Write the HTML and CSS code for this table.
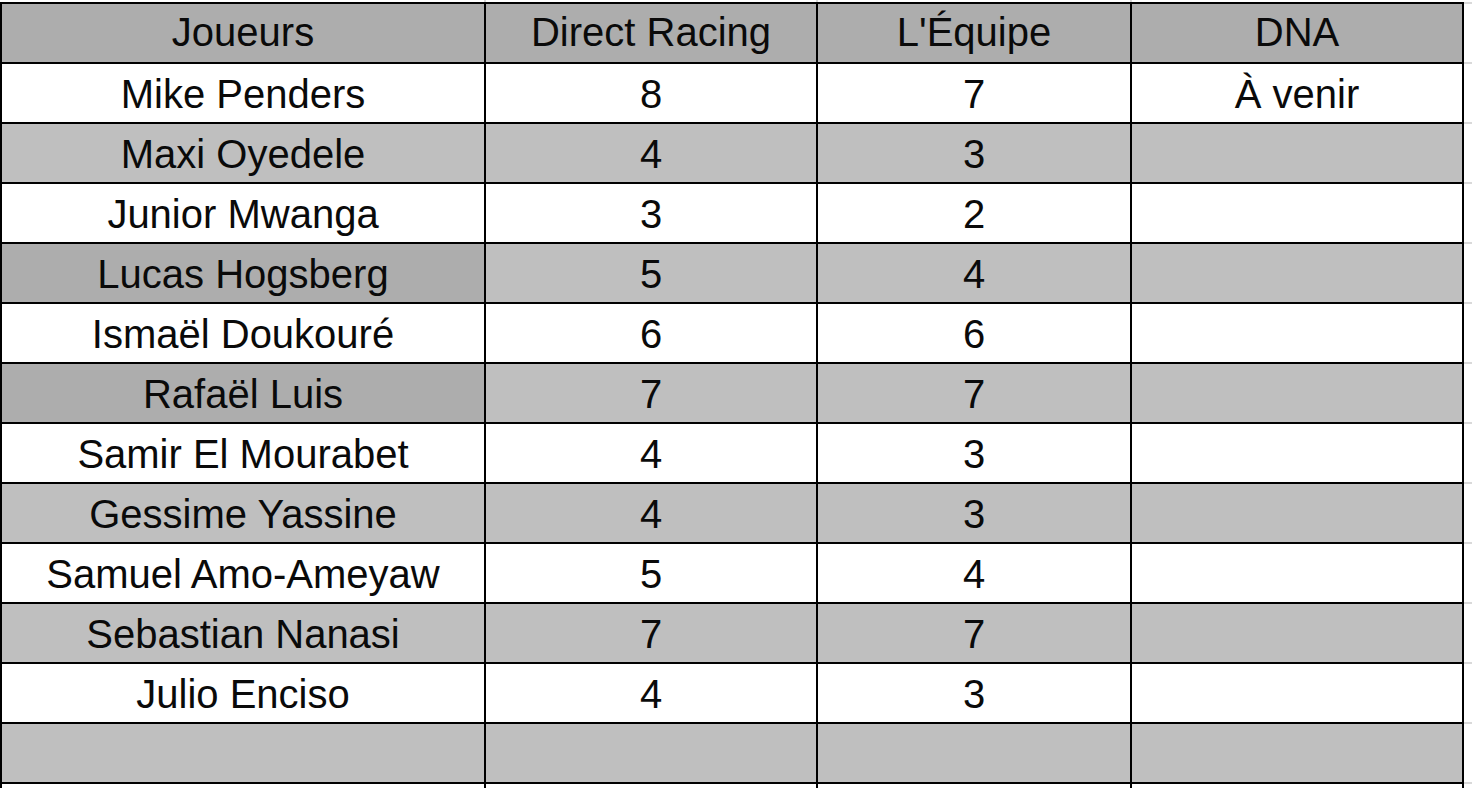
FILE: index.html
```html
<!DOCTYPE html>
<html lang="fr">
<head>
<meta charset="utf-8">
<title>Notes des joueurs</title>
<link rel="stylesheet" href="styles.css">
</head>
<body>
<div class="sheet">
  <div class="cell head">Joueurs</div>
  <div class="cell head">Direct Racing</div>
  <div class="cell head">L'Équipe</div>
  <div class="cell head">DNA</div>

  <div class="cell">Mike Penders</div>
  <div class="cell">8</div>
  <div class="cell">7</div>
  <div class="cell">À venir</div>

  <div class="cell alt">Maxi Oyedele</div>
  <div class="cell alt">4</div>
  <div class="cell alt">3</div>
  <div class="cell alt"></div>

  <div class="cell">Junior Mwanga</div>
  <div class="cell">3</div>
  <div class="cell">2</div>
  <div class="cell"></div>

  <div class="cell alt dark">Lucas Hogsberg</div>
  <div class="cell alt">5</div>
  <div class="cell alt">4</div>
  <div class="cell alt"></div>

  <div class="cell">Ismaël Doukouré</div>
  <div class="cell">6</div>
  <div class="cell">6</div>
  <div class="cell"></div>

  <div class="cell alt dark">Rafaël Luis</div>
  <div class="cell alt">7</div>
  <div class="cell alt">7</div>
  <div class="cell alt"></div>

  <div class="cell">Samir El Mourabet</div>
  <div class="cell">4</div>
  <div class="cell">3</div>
  <div class="cell"></div>

  <div class="cell alt">Gessime Yassine</div>
  <div class="cell alt">4</div>
  <div class="cell alt">3</div>
  <div class="cell alt"></div>

  <div class="cell">Samuel Amo-Ameyaw</div>
  <div class="cell">5</div>
  <div class="cell">4</div>
  <div class="cell"></div>

  <div class="cell alt">Sebastian Nanasi</div>
  <div class="cell alt">7</div>
  <div class="cell alt">7</div>
  <div class="cell alt"></div>

  <div class="cell">Julio Enciso</div>
  <div class="cell">4</div>
  <div class="cell">3</div>
  <div class="cell"></div>

  <div class="cell alt"></div>
  <div class="cell alt"></div>
  <div class="cell alt"></div>
  <div class="cell alt"></div>

  <div class="cell"></div>
  <div class="cell"></div>
  <div class="cell"></div>
  <div class="cell"></div>
</div>
</body>
</html>
```

FILE: styles.css
```css
html, body {
  margin: 0;
  padding: 0;
  height: 100%;
  overflow: hidden;
}

body {
  background-color: #ffffff;
  background-image:
    linear-gradient(to right,
      transparent 0 484px, #d9d9d9 484px 486px,
      transparent 486px 816px, #d9d9d9 816px 818px,
      transparent 818px 1130px, #d9d9d9 1130px 1132px,
      transparent 1132px),
    repeating-linear-gradient(to bottom,
      transparent 0 2px, #d9d9d9 2px 4px, transparent 4px 60px);
  background-size: 100% 2px, 100% 100%;
  background-repeat: no-repeat, repeat;
  font-family: "Liberation Sans", Arial, sans-serif;
  color: #0a0a0a;
}

.sheet {
  margin-top: 2px;
  width: 1464px;
  box-sizing: border-box;
  display: grid;
  grid-template-columns: 482px 330px 312px 330px;
  grid-auto-rows: 58px;
  gap: 2px;
  padding: 2px;
  background: #000000;
}

.cell {
  background: #ffffff;
  height: 58px;
  box-sizing: border-box;
  padding-top: 2px;
  line-height: 56px;
  font-size: 40px;
  text-align: center;
  white-space: nowrap;
  overflow: hidden;
}

.cell.head {
  background: #adadad;
  padding-top: 0;
}

.cell.alt {
  background: #bfbfbf;
}

.cell.alt.dark {
  background: #adadad;
}
```
